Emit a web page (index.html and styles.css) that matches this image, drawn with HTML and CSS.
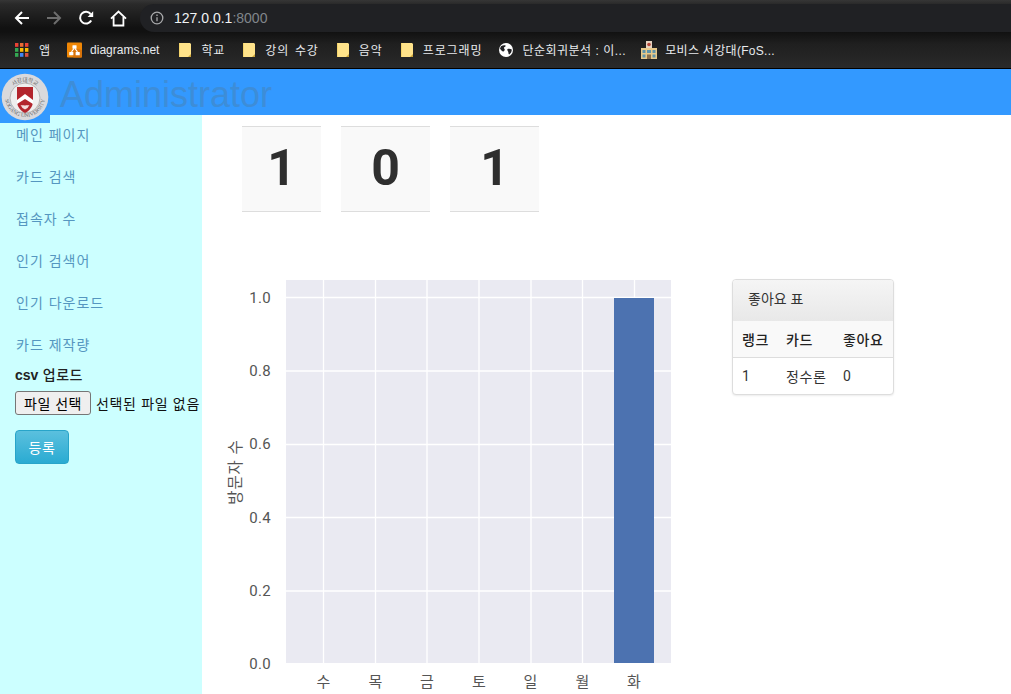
FILE: index.html
```html
<!DOCTYPE html>
<html lang="ko">
<head>
<meta charset="utf-8">
<title>Administrator</title>
<link rel="stylesheet" href="styles.css">
</head>
<body>
<div class="browser">
  <div class="toolbar">
    <span class="nav-btn"><svg class="nav-icon" viewBox="0 0 16 16"><path d="M15 8H2M8 2L2 8l6 6" class="stroke-white"/></svg></span>
    <span class="nav-btn"><svg class="nav-icon" viewBox="0 0 16 16"><path d="M1 8h13M8 2l6 6-6 6" class="stroke-grey"/></svg></span>
    <span class="nav-btn"><svg class="nav-icon" viewBox="0 0 16 16"><path d="M13.2 10.5A5.9 5.9 0 1 1 12.6 4" class="stroke-white"/><path d="M9.6 6.9h5.6V1.3z" class="fill-white"/></svg></span>
    <span class="nav-btn"><svg class="nav-icon home" viewBox="0 0 17 17"><path d="M1 8.6L8.5 1.5 16 8.6M3.6 7v8.5h9.8V7" class="stroke-white thin"/></svg></span>
    <div class="omnibox">
      <svg class="info-icon" viewBox="0 0 14 14"><circle cx="7" cy="7" r="5.8" class="stroke-info"/><path d="M7 6.2v4M7 3.6v1.4" class="stroke-info"/></svg>
      <span class="url">127.0.0.1<span class="url-port">:8000</span></span>
    </div>
  </div>
  <div class="bookmarks">
    <span class="bm bm-apps"><svg class="bm-icon" viewBox="0 0 14 14"><g><rect x="0" y="0" width="3.4" height="3.8" fill="#ea4335"/><rect x="5" y="0" width="3.4" height="3.8" fill="#ea6a35"/><rect x="10" y="0" width="3.4" height="3.8" fill="#ea4335"/><rect x="0" y="5" width="3.4" height="3.8" fill="#34a853"/><rect x="5" y="5" width="3.4" height="3.8" fill="#fbbc04"/><rect x="10" y="5" width="3.4" height="3.8" fill="#fbbc04"/><rect x="0" y="10" width="3.4" height="3.8" fill="#34a853"/><rect x="5" y="10" width="3.4" height="3.8" fill="#4285f4"/><rect x="10" y="10" width="3.4" height="3.8" fill="#d9503f"/></g></svg>앱</span>
    <span class="bm bm-diagrams"><svg class="bm-icon" viewBox="0 0 16 16"><rect width="16" height="16" rx="1" fill="#f08705"/><path d="M16 8v7a1 1 0 0 1-1 1H7L4 12l3-6z" fill="#d9730a"/><rect x="5.8" y="3" width="4.4" height="3.6" rx=".4" fill="#fff"/><rect x="2.4" y="10" width="4.4" height="3.6" rx=".4" fill="#fff"/><rect x="9.2" y="10" width="4.4" height="3.6" rx=".4" fill="#fff"/><path d="M7.4 6.5L4.8 10M8.6 6.5l2.6 3.5" stroke="#fff" stroke-width="1.1"/></svg>diagrams.net</span>
    <span class="bm bm-folder bm-first"><svg class="bm-icon folder" viewBox="0 0 12 14"><path d="M0 0h11l1 1v13H0z" fill="#ffe38a"/><path d="M9 14l3-3v3z" fill="#c9a338"/><path d="M0 0h1v14H0z" fill="#f4d46c"/></svg>학교</span>
    <span class="bm bm-folder"><svg class="bm-icon folder" viewBox="0 0 12 14"><path d="M0 0h11l1 1v13H0z" fill="#ffe38a"/><path d="M9 14l3-3v3z" fill="#c9a338"/><path d="M0 0h1v14H0z" fill="#f4d46c"/></svg>강의 수강</span>
    <span class="bm bm-folder"><svg class="bm-icon folder" viewBox="0 0 12 14"><path d="M0 0h11l1 1v13H0z" fill="#ffe38a"/><path d="M9 14l3-3v3z" fill="#c9a338"/><path d="M0 0h1v14H0z" fill="#f4d46c"/></svg>음악</span>
    <span class="bm bm-folder"><svg class="bm-icon folder" viewBox="0 0 12 14"><path d="M0 0h11l1 1v13H0z" fill="#ffe38a"/><path d="M9 14l3-3v3z" fill="#c9a338"/><path d="M0 0h1v14H0z" fill="#f4d46c"/></svg>프로그래밍</span>
    <span class="bm bm-globe"><svg class="bm-icon" viewBox="0 0 14 14"><circle cx="7" cy="7" r="7" fill="#fff"/><path d="M2 3.2c1.6-1 3.2-1.2 4.6-.8.4 1-.6 1.6-1.6 2-.4 1 .8 1.4.8 2.4 0 1-1 .8-1.4 2C3.2 8.2 1.600 7 1 5.400zM8.600 6c1.400-.4 3-.2 4.200.6 0 2.200-1 3.800-2.600 5-1-.6-.6-1.800-1-2.800-.4-.8-1.400-2-.6-2.800z" fill="#202124"/></svg>단순회귀분석 : 이...</span>
    <span class="bm bm-school"><svg class="bm-icon school" viewBox="0 0 16 18"><path d="M5 0h6v7H5z" fill="#e6d3c0"/><circle cx="8" cy="3.500" r="1.800" fill="#b5483a"/><path d="M0 7h16v11H0z" fill="#e7c98a"/><path d="M1.500 9h3v3h-3zM6 9h4v3H6zM11.500 9h3v3h-3zM1.500 13.500h3v3h-3zM11.500 13.500h3v3h-3z" fill="#5f93a8"/><path d="M6 13.500h4V18H6z" fill="#8a6d4a"/></svg>모비스 서강대(FoS...</span>
  </div>
</div>
<header class="site-header">
  <div class="logo-box">
    <svg class="logo" viewBox="0 0 50 50">
      <defs><path id="ringLow" d="M5 25a20 20 0 0 0 40 0"/><path id="ringTop" d="M9 22a16.500 16.500 0 0 1 32 0"/></defs>
      <circle cx="25" cy="25" r="23.300" fill="#d9d9dc"/>
      <circle cx="25" cy="26" r="15" fill="#efefef" stroke="#a0a0a0" stroke-width=".7"/>
      <text class="logo-text"><textPath href="#ringLow" startOffset="50%">SOGANG UNIVERSITY</textPath></text>
      <text class="logo-text"><textPath href="#ringTop" startOffset="50%">서강대학교</textPath></text>
      <path d="M17 15h16v14c0 6-4 10-8 12-4-2-8-6-8-12z" fill="#b3252d"/>
      <path d="M17 28l8-6 8 6v4l-8-5-8 5z" fill="#fff"/>
      <path d="M20.500 33c1.500.5 7.500.5 9 0l-2 3-2.500 1.500-2.500-1.500z" fill="#f3dcdc"/>
    </svg>
  </div>
  <h1 class="site-title">Administrator</h1>
</header>
<div class="page">
  <aside class="sidebar">
    <ul class="side-nav">
      <li class="side-item"><a class="side-link" href="#">메인 페이지</a></li>
      <li class="side-item"><a class="side-link" href="#">카드 검색</a></li>
      <li class="side-item"><a class="side-link" href="#">접속자 수</a></li>
      <li class="side-item"><a class="side-link" href="#">인기 검색어</a></li>
      <li class="side-item"><a class="side-link" href="#">인기 다운로드</a></li>
      <li class="side-item"><a class="side-link" href="#">카드 제작량</a></li>
    </ul>
    <form class="upload">
      <div class="upload-label"><span class="upload-ext">csv</span> 업로드</div>
      <div class="file-row"><button type="button" class="file-btn">파일 선택</button><span class="file-name">선택된 파일 없음</span></div>
      <button type="button" class="submit-btn">등록</button>
    </form>
  </aside>
  <main class="content">
    <div class="stats">
      <div class="stat stat-narrow">1</div>
      <div class="stat">0</div>
      <div class="stat">1</div>
    </div>
    <div class="lower">
      <svg class="chart" viewBox="222 270 460 424">
        <rect x="286" y="280" width="385" height="383" fill="#eaeaf2"/>
        <g class="grid">
          <path d="M286 297.500H671M286 371H671M286 444.500H671M286 517.500H671M286 591H671"/>
          <path d="M323.500 280V663M375.500 280V663M427 280V663M479 280V663M531 280V663M582.500 280V663M634.500 280V663"/>
        </g>
        <rect x="614" y="298" width="40" height="365" fill="#4c72b0"/>
        <g class="y-ticks">
          <text x="271" y="303">1.0</text>
          <text x="271" y="376">0.8</text>
          <text x="271" y="449">0.6</text>
          <text x="271" y="523">0.4</text>
          <text x="271" y="596">0.2</text>
          <text x="271" y="669">0.0</text>
        </g>
        <g class="x-ticks">
          <text x="323.500" y="687">수</text>
          <text x="375.500" y="687">목</text>
          <text x="427" y="687">금</text>
          <text x="479" y="687">토</text>
          <text x="530.500" y="687">일</text>
          <text x="582.500" y="687">월</text>
          <text x="634" y="687">화</text>
        </g>
        <text class="y-title" transform="translate(241 472) rotate(-90)">방문자 수</text>
      </svg>
      <section class="panel">
        <div class="panel-heading">좋아요 표</div>
        <table class="rank-table">
          <thead><tr class="rank-head"><th class="col-rank">랭크</th><th class="col-card">카드</th><th class="col-like">좋아요</th></tr></thead>
          <tbody><tr class="rank-row"><td class="rank-num">1</td><td>정수론</td><td class="rank-num">0</td></tr></tbody>
        </table>
      </section>
    </div>
  </main>
</div>
</body>
</html>
```

FILE: styles.css
```css
* { box-sizing: border-box; }
html, body { margin: 0; height: 694px; overflow: hidden; }
body {
  font-family: "Liberation Sans", "Noto Sans CJK KR", sans-serif;
  font-size: 14px;
  color: #333;
  background: #fff;
  display: flex;
  flex-direction: column;
}

/* browser chrome */
.browser { height: 69px; flex: none; background: #1a1a1b; }
.toolbar {
  height: 32px;
  display: flex;
  align-items: flex-end;
  padding-left: 6px;
  background: linear-gradient(#363636 0, #2a2a2a 4px, #111 28px, #111 32px);
}
.nav-btn { width: 32px; height: 28px; display: flex; align-items: center; justify-content: center; }
.nav-icon { width: 16px; height: 16px; }
.nav-icon.home { width: 17px; height: 17px; }
.stroke-white { fill: none; stroke: #fff; stroke-width: 2; }
.stroke-white.thin { stroke-width: 1.800; }
.stroke-grey { fill: none; stroke: #6d6d6d; stroke-width: 2; }
.stroke-info { fill: none; stroke: #a8a9ab; stroke-width: 1.300; }
.fill-white { fill: #fff; }
.omnibox {
  flex: 1;
  height: 28px;
  margin-left: 6px;
  padding-left: 11px;
  display: flex;
  align-items: center;
  gap: 11px;
  background: #202124;
  border-radius: 14px 0 0 14px;
}
.info-icon { width: 14px; height: 14px; margin-left: -1px; }
.url { font-size: 14px; color: #f1f3f4; margin-left: -1px; }
.url-port { color: #80868b; }

.bookmarks {
  height: 37px;
  display: flex;
  align-items: center;
  padding-bottom: 1px;
  font-size: 12px;
  color: #e8eaed;
  background: linear-gradient(#111 0, #1f1f1f 12px, #2a2a2a 36px);
  border-bottom: 1px solid #000;
  white-space: nowrap;
}
.bm { display: flex; align-items: center; }
.bm-icon { flex: none; width: 14px; height: 14px; }
.bm-apps { margin-left: 15px; gap: 10px; }
.bm-diagrams { margin-left: 17px; gap: 8px; }
.bm-diagrams .bm-icon { width: 15px; height: 16px; }
.bm-folder { margin-left: 18px; gap: 10px; letter-spacing: .9px; word-spacing: 1.500px; }
.bm-folder.bm-first { margin-left: 20px; }
.bm-icon.folder { width: 12px; height: 14px; }
.bm-globe { margin-left: 17px; gap: 9px; letter-spacing: .5px; }
.bm-school { margin-left: 15px; gap: 8px; letter-spacing: .3px; }
.bm-icon.school { width: 16px; height: 18px; }

/* site header */
.site-header {
  flex: none;
  height: 46px;
  display: flex;
  background: #3399ff;
}
.logo-box {
  position: relative;
  z-index: 1;
  width: 50px;
  height: 54px;
  padding-top: 3px;
  background: #3399ff;
}
.logo { display: block; width: 50px; height: 50px; }
.logo-text { font-size: 5.500px; fill: #666; text-anchor: middle; font-family: "Liberation Serif", "Noto Sans CJK KR", serif; }
.site-title {
  margin: 0 0 0 10px;
  font-size: 36px;
  font-weight: 400;
  line-height: 52px;
  color: #3d8dd8;
}

/* page */
.page { flex: 1; display: flex; min-height: 0; }
.sidebar { width: 202px; flex: none; background: #ccffff; }
.side-nav { list-style: none; margin: 0; padding: 0; }
.side-item { height: 42px; }
.side-link { display: block; padding: 10px 16px; line-height: 20px; color: #5596c0; text-decoration: none; font-size: 14px; letter-spacing: 1px; }
.upload { padding: 0 0 0 15px; margin-top: -2px; }
.upload-label { font-weight: 500; line-height: 20px; color: #222; letter-spacing: .5px; }
.upload-ext { font-weight: 700; letter-spacing: 0; }
.file-row { display: flex; align-items: center; margin-top: 6px; white-space: nowrap; color: #111; }
.file-btn {
  width: 76px;
  height: 24px;
  padding: 0;
  font: 14px "Liberation Sans", "Noto Sans CJK KR", sans-serif;
  letter-spacing: .5px;
  color: #000;
  background: #efefef;
  border: 1px solid #767676;
  border-radius: 3px;
}
.file-name { margin-left: 5px; font-size: 14px; letter-spacing: .67px; }
.submit-btn {
  display: block;
  width: 54px;
  height: 34px;
  margin-top: 15px;
  padding: 0;
  font: 14px "Liberation Sans", "Noto Sans CJK KR", sans-serif;
  letter-spacing: .5px;
  color: #fff;
  background: linear-gradient(#5bc0de, #2aabd2);
  border: 1px solid #28a4c9;
  border-radius: 4px;
}

.content { flex: 1; min-width: 0; }
.stats { display: flex; gap: 20px; padding: 11px 0 0 40px; }
.stat {
  width: 89px;
  height: 86px;
  padding-bottom: 3px;
  display: flex;
  align-items: center;
  justify-content: center;
  font-family: Roboto, "Liberation Sans", sans-serif;
  font-size: 50px;
  font-weight: 700;
  color: #2f2f2f;
  background: #f9f9f9;
  border-top: 1px solid #ddd;
  border-bottom: 1px solid #ddd;
}
.stat-narrow { width: 79px; }

.lower { display: flex; align-items: flex-start; margin-top: 58px; padding-left: 20px; }
.chart { flex: none; display: block; width: 460px; height: 424px; }
.grid path { fill: none; stroke: #fff; stroke-width: 1.300; }
.y-ticks text { font-family: Roboto, "Liberation Sans", sans-serif; font-size: 15px; fill: #555; text-anchor: end; letter-spacing: .3px; }
.x-ticks text { font-size: 15px; fill: #555; text-anchor: middle; }
.y-title { font-size: 15.500px; fill: #555; text-anchor: middle; letter-spacing: .8px; }

.panel {
  width: 162px;
  margin: 9px 0 0 50px;
  background: #fff;
  border: 1px solid #ddd;
  border-radius: 4px;
  box-shadow: 0 1px 2px rgba(0,0,0,.08);
  overflow: hidden;
}
.panel-heading {
  height: 41px;
  padding: 0 15px;
  line-height: 38px;
  color: #333;
  background: linear-gradient(#f5f5f5, #e8e8e8);
}
.rank-table { width: 100%; border-collapse: collapse; table-layout: fixed; letter-spacing: .6px; }
.rank-head { height: 36px; background: #f9f9f9; border-bottom: 1px solid #ddd; }
.rank-head th { font-weight: 500; text-align: left; padding: 0 0 0 9px; white-space: nowrap; color: #222; }
.rank-row { height: 37px; }
.rank-row td { padding: 0 0 0 9px; white-space: nowrap; }
.rank-num { font-family: Roboto, "Liberation Sans", sans-serif; }
.col-rank { width: 44px; }
.col-card { width: 57px; }
```
